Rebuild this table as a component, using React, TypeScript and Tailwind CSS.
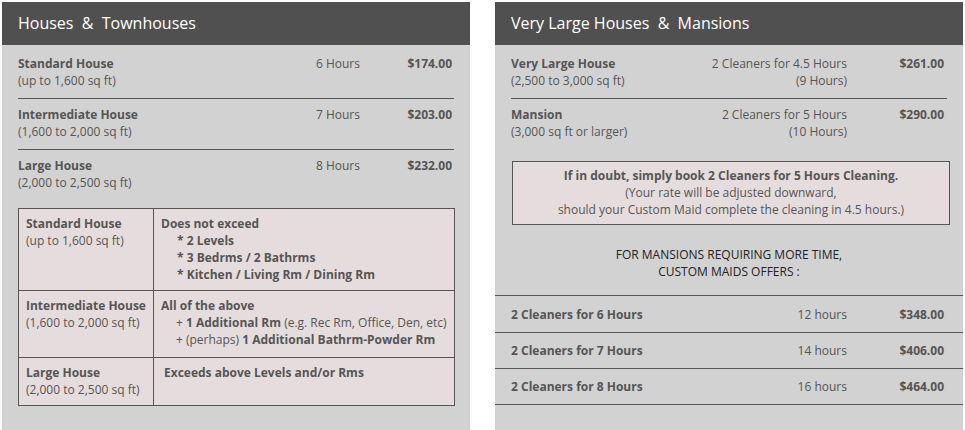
const font = { fontFamily: '"Open Sans", "Liberation Sans", sans-serif' };

function Header({ children }: { children: React.ReactNode }) {
  return (
    <div className="flex h-[43px] items-center bg-[#505050] px-4 text-[16px] text-white">
      {children}
    </div>
  );
}

function PriceRow({
  title,
  sub,
  hours,
  price,
  hoursWidth,
  last,
}: {
  title: string;
  sub: string;
  hours: React.ReactNode;
  price: string;
  hoursWidth: string;
  last?: boolean;
}) {
  return (
    <div
      className={
        "flex h-[51px] pt-[7px] " + (last ? "" : "border-b border-[#555]")
      }
    >
      <div className="flex-1">
        <p className="font-bold">{title}</p>
        <p>{sub}</p>
      </div>
      <div className="text-right">{hours}</div>
      <div className={"text-right font-bold " + hoursWidth}>{price}</div>
    </div>
  );
}

function TableRow({
  title,
  sub,
  height,
  children,
}: {
  title: string;
  sub: string;
  height: string;
  children: React.ReactNode;
}) {
  return (
    <div className={"grid grid-cols-[135px_1fr] " + height}>
      <div className="border-r border-[#555] px-[7px] pt-[6px]">
        <p className="font-bold">{title}</p>
        <p>{sub}</p>
      </div>
      <div className="px-[7px] pt-[6px]">{children}</div>
    </div>
  );
}

function OfferRow({ title, hours, price, h }: { title: string; hours: string; price: string; h: string }) {
  return (
    <div className={"flex items-center border-b border-[#555] px-4 " + h}>
      <p className="flex-1 font-bold">{title}</p>
      <p className="text-right">{hours}</p>
      <p className="w-[100px] pr-[3px] text-right font-bold">{price}</p>
    </div>
  );
}

export default function App() {
  return (
    <div
      className="flex gap-[25px] bg-white px-[2px] pt-[2px] text-[12px] leading-[17px] text-[#555]"
      style={font}
    >
      <section className="h-[428px] w-[468px] bg-[#d2d2d2]">
        <Header>Houses&nbsp; &amp;&nbsp; Townhouses</Header>
        <div className="px-4 pt-[3px]">
          <PriceRow
            title="Standard House"
            sub="(up to 1,600 sq ft)"
            hours="6 Hours"
            price="$174.00"
            hoursWidth="w-[94px] pr-[2px]"
          />
          <PriceRow
            title="Intermediate House"
            sub="(1,600 to 2,000 sq ft)"
            hours="7 Hours"
            price="$203.00"
            hoursWidth="w-[94px] pr-[2px]"
          />
          <PriceRow
            title="Large House"
            sub="(2,000 to 2,500 sq ft)"
            hours="8 Hours"
            price="$232.00"
            hoursWidth="w-[94px] pr-[2px]"
            last
          />

          <div className="mt-[7px] w-[437px] divide-y divide-[#555] border border-[#555] bg-[#e5dddd]">
            <TableRow title="Standard House" sub="(up to 1,600 sq ft)" height="h-[82px]">
              <p className="font-bold">Does not exceed</p>
              <div className="pl-4 font-bold">
                <p>* 2 Levels</p>
                <p>* 3 Bedrms / 2 Bathrms</p>
                <p>* Kitchen / Living Rm / Dining Rm</p>
              </div>
            </TableRow>
            <TableRow title="Intermediate House" sub="(1,600 to 2,000 sq ft)" height="h-[67px]">
              <p className="font-bold">All of the above</p>
              <div className="pl-[15px]">
                <p>
                  + <b>1 Additional Rm</b> (e.g. Rec Rm, Office, Den, etc)
                </p>
                <p>
                  + (perhaps) <b>1 Additional Bathrm-Powder Rm</b>
                </p>
              </div>
            </TableRow>
            <TableRow title="Large House" sub="(2,000 to 2,500 sq ft)" height="h-[47px]">
              <p className="pl-[3px] font-bold">Exceeds above Levels and/or Rms</p>
            </TableRow>
          </div>
        </div>
      </section>

      <section className="h-[428px] w-[468px] bg-[#d2d2d2]">
        <Header>Very Large Houses&nbsp; &amp;&nbsp; Mansions</Header>
        <div className="px-4 pt-[3px]">
          <PriceRow
            title="Very Large House"
            sub="(2,500 to 3,000 sq ft)"
            hours={
              <>
                <p>2 Cleaners for 4.5 Hours</p>
                <p>(9 Hours)</p>
              </>
            }
            price="$261.00"
            hoursWidth="w-[100px] pr-[3px]"
          />
          <PriceRow
            title="Mansion"
            sub="(3,000 sq ft or larger)"
            hours={
              <>
                <p>2 Cleaners for 5 Hours</p>
                <p>(10 Hours)</p>
              </>
            }
            price="$290.00"
            hoursWidth="w-[100px] pr-[3px]"
            last
          />

          <div className="ml-px mt-[11px] h-[64px] w-[438px] border border-[#555] bg-[#e5dddd] pt-[5px] text-center">
            <p className="font-bold">If in doubt, simply book 2 Cleaners for 5 Hours Cleaning.</p>
            <p>(Your rate will be adjusted downward,</p>
            <p>should your Custom Maid complete the cleaning in 4.5 hours.)</p>
          </div>

          <div className="mt-[21px] text-center text-[#222]">
            <p>FOR MANSIONS REQUIRING MORE TIME,</p>
            <p>CUSTOM MAIDS OFFERS :</p>
          </div>
        </div>

        <div className="mt-[15px] border-t border-[#555]">
          <OfferRow title="2 Cleaners for 6 Hours" hours="12 hours" price="$348.00" h="h-[37px]" />
          <OfferRow title="2 Cleaners for 7 Hours" hours="14 hours" price="$406.00" h="h-[36px]" />
          <OfferRow title="2 Cleaners for 8 Hours" hours="16 hours" price="$464.00" h="h-[36px]" />
        </div>
      </section>
    </div>
  );
}
